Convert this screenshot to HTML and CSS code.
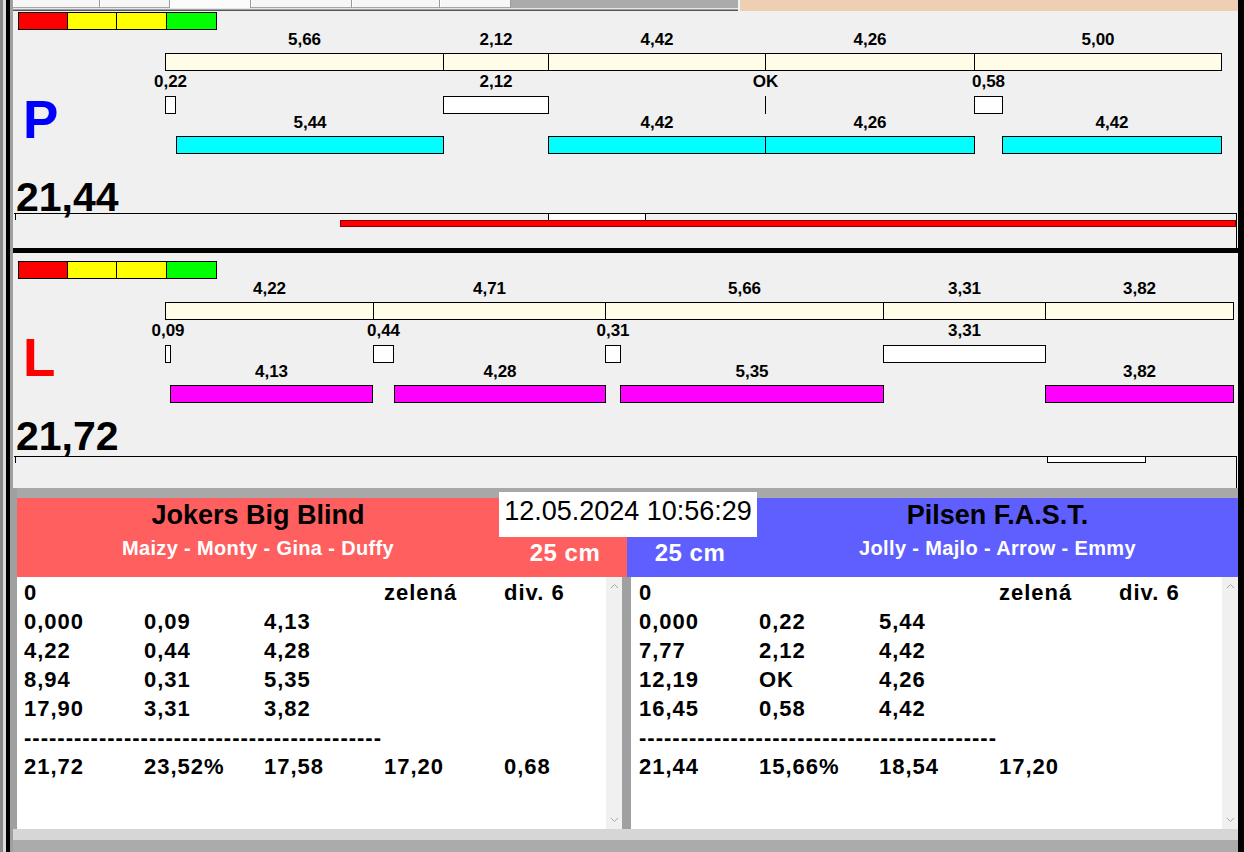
FILE: index.html
```html
<!DOCTYPE html>
<html>
<head>
<meta charset="utf-8">
<title>Timing</title>
<link rel="stylesheet" href="styles.css">
</head>
<body>
<div class="window">
  <div class="edge-left"></div>
  <div class="main">
    <div class="topbar">
      <div class="topbar-left">
        <div class="tabs">
          <span class="tab" style="width:87px"></span>
          <span class="tab" style="width:70px"></span>
          <span class="tab tab-active" style="width:81px"></span>
          <span class="tab" style="width:101px"></span>
          <span class="tab" style="width:88px"></span>
          <span class="tab" style="width:71px"></span>
          <span class="tab-gap"></span>
        </div>
        <div class="topline"></div>
      </div>
      <div class="peach"></div>
    </div>

    <section class="chart chart-p">
      <div class="lights lights-p"><span class="lt red"></span><span class="lt yellow"></span><span class="lt yellow w51"></span><span class="lt green w51"></span></div>
      <div class="row labels lab1">
        <span class="seg-lab" style="left:152px;width:279px">5,66</span>
        <span class="seg-lab" style="left:430px;width:106px">2,12</span>
        <span class="seg-lab" style="left:535px;width:218px">4,42</span>
        <span class="seg-lab" style="left:752px;width:210px">4,26</span>
        <span class="seg-lab" style="left:961px;width:248px">5,00</span>
      </div>
      <div class="row track track1">
        <span class="seg cream" style="left:152px;width:279px"></span>
        <span class="seg cream" style="left:430px;width:106px"></span>
        <span class="seg cream" style="left:535px;width:218px"></span>
        <span class="seg cream" style="left:752px;width:210px"></span>
        <span class="seg cream" style="left:961px;width:248px"></span>
      </div>
      <div class="row labels lab2">
        <span class="seg-lab" style="left:152px;width:11px">0,22</span>
        <span class="seg-lab" style="left:430px;width:106px">2,12</span>
        <span class="seg-lab" style="left:752px;width:1px">OK</span>
        <span class="seg-lab" style="left:961px;width:29px">0,58</span>
      </div>
      <div class="row track track2">
        <span class="seg white" style="left:152px;width:11px"></span>
        <span class="seg white" style="left:430px;width:106px"></span>
        <span class="seg tick" style="left:752px;width:1px"></span>
        <span class="seg white" style="left:961px;width:29px"></span>
      </div>
      <div class="row labels lab3">
        <span class="seg-lab" style="left:163px;width:268px">5,44</span>
        <span class="seg-lab" style="left:535px;width:218px">4,42</span>
        <span class="seg-lab" style="left:752px;width:210px">4,26</span>
        <span class="seg-lab" style="left:989px;width:220px">4,42</span>
      </div>
      <div class="row track track3">
        <span class="seg cyan" style="left:163px;width:268px"></span>
        <span class="seg cyan" style="left:535px;width:218px"></span>
        <span class="seg cyan" style="left:752px;width:210px"></span>
        <span class="seg cyan" style="left:989px;width:220px"></span>
      </div>
      <div class="total total-p">21,44</div>
      <div class="strip strip-p">
        <span class="strip-box" style="left:534px;width:98px"></span>
        <span class="strip-red" style="left:326px;width:896px"></span>
      </div>
      <div class="side-letter letter-p">P</div>
    </section>

    <div class="divider"></div>

    <section class="chart chart-l">
      <div class="lights lights-l"><span class="lt red"></span><span class="lt yellow"></span><span class="lt yellow w51"></span><span class="lt green w51"></span></div>
      <div class="row labels lab1">
        <span class="seg-lab" style="left:152px;width:209px">4,22</span>
        <span class="seg-lab" style="left:360px;width:233px">4,71</span>
        <span class="seg-lab" style="left:592px;width:279px">5,66</span>
        <span class="seg-lab" style="left:870px;width:163px">3,31</span>
        <span class="seg-lab" style="left:1032px;width:189px">3,82</span>
      </div>
      <div class="row track track1">
        <span class="seg cream" style="left:152px;width:209px"></span>
        <span class="seg cream" style="left:360px;width:233px"></span>
        <span class="seg cream" style="left:592px;width:279px"></span>
        <span class="seg cream" style="left:870px;width:163px"></span>
        <span class="seg cream" style="left:1032px;width:189px"></span>
      </div>
      <div class="row labels lab2">
        <span class="seg-lab" style="left:152px;width:6px">0,09</span>
        <span class="seg-lab" style="left:360px;width:21px">0,44</span>
        <span class="seg-lab" style="left:592px;width:16px">0,31</span>
        <span class="seg-lab" style="left:870px;width:163px">3,31</span>
      </div>
      <div class="row track track2">
        <span class="seg white" style="left:152px;width:6px"></span>
        <span class="seg white" style="left:360px;width:21px"></span>
        <span class="seg white" style="left:592px;width:16px"></span>
        <span class="seg white" style="left:870px;width:163px"></span>
      </div>
      <div class="row labels lab3">
        <span class="seg-lab" style="left:157px;width:203px">4,13</span>
        <span class="seg-lab" style="left:381px;width:212px">4,28</span>
        <span class="seg-lab" style="left:607px;width:264px">5,35</span>
        <span class="seg-lab" style="left:1032px;width:189px">3,82</span>
      </div>
      <div class="row track track3">
        <span class="seg magenta" style="left:157px;width:203px"></span>
        <span class="seg magenta" style="left:381px;width:212px"></span>
        <span class="seg magenta" style="left:607px;width:264px"></span>
        <span class="seg magenta" style="left:1032px;width:189px"></span>
      </div>
      <div class="total total-l">21,72</div>
      <div class="strip strip-l">
        <span class="strip-box strip-box-l" style="left:1033px;width:99px"></span>
      </div>
      <div class="side-letter letter-l">L</div>
    </section>

    <div class="bottom">
      <div class="band"></div>
      <div class="teams">
        <div class="team-title bg-red">
          <div class="team-name">Jokers Big Blind</div>
          <div class="team-dogs">Maizy - Monty - Gina - Duffy</div>
        </div>
        <div class="team-cm bg-red cm-left">25 cm</div>
        <div class="team-cm bg-blue cm-right">25 cm</div>
        <div class="team-title bg-blue">
          <div class="team-name">Pilsen F.A.S.T.</div>
          <div class="team-dogs">Jolly - Majlo - Arrow - Emmy</div>
        </div>
      </div>
      <div class="datetime">12.05.2024 10:56:29</div>
    </div>

    <div class="lists">
      <div class="list">
        <div class="list-body">
          <div class="lrow"><span>0</span><span></span><span></span><span>zelená</span><span>div. 6</span></div>
          <div class="lrow"><span>0,000</span><span>0,09</span><span>4,13</span></div>
          <div class="lrow"><span>4,22</span><span>0,44</span><span>4,28</span></div>
          <div class="lrow"><span>8,94</span><span>0,31</span><span>5,35</span></div>
          <div class="lrow"><span>17,90</span><span>3,31</span><span>3,82</span></div>
          <div class="lrow dashes">-------------------------------------------</div>
          <div class="lrow"><span>21,72</span><span>23,52%</span><span>17,58</span><span>17,20</span><span>0,68</span></div>
        </div>
        <div class="scroll">
          <svg width="9" height="6" viewBox="0 0 9 6"><polyline points="1,5 4.5,1.5 8,5" fill="none" stroke="#a8a8a8" stroke-width="1"/></svg>
          <svg width="9" height="6" viewBox="0 0 9 6"><polyline points="1,1 4.5,4.5 8,1" fill="none" stroke="#a8a8a8" stroke-width="1"/></svg>
        </div>
      </div>
      <div class="list list-right">
        <div class="list-body">
          <div class="lrow"><span>0</span><span></span><span></span><span>zelená</span><span>div. 6</span></div>
          <div class="lrow"><span>0,000</span><span>0,22</span><span>5,44</span></div>
          <div class="lrow"><span>7,77</span><span>2,12</span><span>4,42</span></div>
          <div class="lrow"><span>12,19</span><span>OK</span><span>4,26</span></div>
          <div class="lrow"><span>16,45</span><span>0,58</span><span>4,42</span></div>
          <div class="lrow dashes">-------------------------------------------</div>
          <div class="lrow"><span>21,44</span><span>15,66%</span><span>18,54</span><span>17,20</span></div>
        </div>
        <div class="scroll">
          <svg width="9" height="6" viewBox="0 0 9 6"><polyline points="1,5 4.5,1.5 8,5" fill="none" stroke="#a8a8a8" stroke-width="1"/></svg>
          <svg width="9" height="6" viewBox="0 0 9 6"><polyline points="1,1 4.5,4.5 8,1" fill="none" stroke="#a8a8a8" stroke-width="1"/></svg>
        </div>
      </div>
    </div>

    <div class="footer"></div>
  </div>
  <div class="edge-right"></div>
</div>
</body>
</html>
```

FILE: styles.css
```css
* { box-sizing: border-box; }
html, body { margin: 0; padding: 0; }
body {
  width: 1244px;
  height: 852px;
  overflow: hidden;
  background: #a0a0a0;
  font-family: "Liberation Sans", Arial, sans-serif;
  color: #000;
}
.window { display: flex; height: 852px; }
.edge-left {
  width: 13px;
  flex: none;
  background: linear-gradient(to right, #8a8a8a 0 3px, #dcdcdc 3px 6px, #000 6px 10px, #a0a0a0 10px 13px);
}
.main { width: 1225px; flex: none; display: flex; flex-direction: column; }
.edge-right { flex: 1; background: #000; }

/* top strip */
.topbar { height: 11px; display: flex; flex: none; }
.topbar-left { width: 725px; display: flex; flex-direction: column; }
.tabs { height: 8px; display: flex; }
.tab {
  height: 8px;
  background: #f6f6f6;
  border-right: 1px solid #9a9a9a;
  border-bottom: 1px solid #a6a6a6;
  box-shadow: inset 1px 0 #ffffff;
}
.tab-active { border-bottom: none; background: #fbfbfb; }
.tab-gap { flex: 1; background: #ababab; }
.topline { height: 3px; background: linear-gradient(#e6e6e6 0 1px, #a0a0a0 1px 2px, #555 2px 3px); }
.peach { flex: 1; background: #efcfb3; border-left: 2px solid #f3f3f3; }

/* charts */
.chart {
  position: relative;
  display: flex;
  flex-direction: column;
  background: #f0f0f0;
  flex: none;
}
.chart-p { height: 237px; }
.chart-l { height: 235px; }

.lights {
  display: flex;
  margin-left: 5px;
  height: 18px;
  flex: none;
}
.lights-p { margin-top: 1px; }
.lights-l { margin-top: 8px; }
.lt { width: 50px; height: 18px; border: 1px solid #000; margin-right: -1px; }
.lt.w51 { width: 51px; }
.red { background: #ff0000; }
.yellow { background: #ffff00; }
.green { background: #00ff00; }

.row { position: relative; height: 18px; flex: none; }
.labels { font-weight: bold; font-size: 17px; line-height: 18px; }
.lab1 { margin-top: 1px; }
.track1 { margin-top: 4px; }
.lab2 { margin-top: 2px; }
.track2 { margin-top: 5px; }
.track3 { margin-top: 4px; }
.seg-lab {
  position: absolute;
  top: 0;
  display: flex;
  justify-content: center;
  white-space: nowrap;
}
.seg {
  position: absolute;
  top: 0;
  height: 18px;
  border: 1px solid #000;
}
.cream { background: #fffde8; }
.white { background: #ffffff; }
.cyan { background: #00ffff; }
.magenta { background: #ff00ff; }
.tick { border: none; background: #000; }

.total {
  font-weight: bold;
  font-size: 41px;
  line-height: 36px;
  height: 34px;
  padding-left: 3px;
  flex: none;
  white-space: nowrap;
}
.total-p { margin-top: 25px; }
.total-l { margin-top: 15px; }

.strip {
  position: relative;
  flex: 1;
  margin-left: 1px;
  width: 1223px;
  border-top: 1px solid #000;
  border-right: 1px solid #000;
}
.strip-l { margin-top: 4px; }
.strip::before {
  content: "";
  position: absolute;
  left: 1px;
  top: 0;
  width: 1px;
  height: 6px;
  background: #000;
}
.strip-box {
  position: absolute;
  top: -1px;
  height: 8px;
  border: 1px solid #000;
  background: #fff;
}
.strip-box-l { height: 7px; }
.strip-red {
  position: absolute;
  top: 6px;
  height: 7px;
  background: #ff0000;
  border: 1px solid #8a0000;
}

.side-letter {
  position: absolute;
  left: 10px;
  font-weight: bold;
  font-size: 53px;
  line-height: 53px;
}
.letter-p { top: 82px; color: #0000ff; }
.letter-l { top: 78px; color: #ff0000; }

.divider { height: 5px; background: #000; flex: none; }

/* teams header */
.bottom { position: relative; padding-left: 4px; background: #a0a0a0; flex: none; }
.band { height: 10px; background: #a8a8a8; }
.teams {
  display: grid;
  grid-template-columns: 482px 128px 130px 481px;
  height: 79px;
}
.bg-red { background: #ff5f5f; }
.bg-blue { background: #5f5fff; }
.team-title { text-align: center; padding-top: 1px; white-space: nowrap; }
.team-name { font-weight: bold; font-size: 27px; line-height: 32px; color: #000; }
.team-dogs {
  margin-top: 5px;
  font-weight: bold;
  font-size: 20px;
  line-height: 24px;
  letter-spacing: 0.35px;
  color: #fff;
}
.team-cm {
  padding-top: 41px;
  text-align: center;
  font-weight: bold;
  font-size: 24px;
  line-height: 27px;
  letter-spacing: 0.5px;
  color: #fff;
}
.cm-left { padding-left: 4px; }
.cm-right { padding-right: 4px; }
.datetime {
  position: absolute;
  left: 486px;
  top: 4px;
  width: 258px;
  height: 45px;
  padding-top: 4px;
  background: #fff;
  text-align: center;
  font-size: 27px;
  line-height: 30px;
  white-space: nowrap;
}

/* lists */
.lists {
  display: grid;
  grid-template-columns: 605px 607px;
  column-gap: 9px;
  padding-left: 4px;
  height: 252px;
  background: #a0a0a0;
  flex: none;
}
.list { display: flex; background: #fff; min-width: 0; }
.list-body {
  flex: 1;
  min-width: 0;
  overflow: hidden;
  padding: 1px 0 0 7px;
  font-weight: bold;
  font-size: 22px;
  line-height: 29px;
  letter-spacing: 1px;
}
.list-right .list-body { padding-left: 8px; }
.lrow {
  display: grid;
  grid-template-columns: repeat(5, 120px);
  height: 29px;
  white-space: nowrap;
}
.lrow.dashes { display: block; }
.scroll {
  width: 16px;
  flex: none;
  background: #f0f0f0;
  display: flex;
  flex-direction: column;
  justify-content: space-between;
  align-items: center;
  padding: 6px 0 6px;
}
.scroll svg { display: block; }

.footer {
  flex: 1;
  background: linear-gradient(#d6d6d6 0 11px, #ababab 11px);
}
```
